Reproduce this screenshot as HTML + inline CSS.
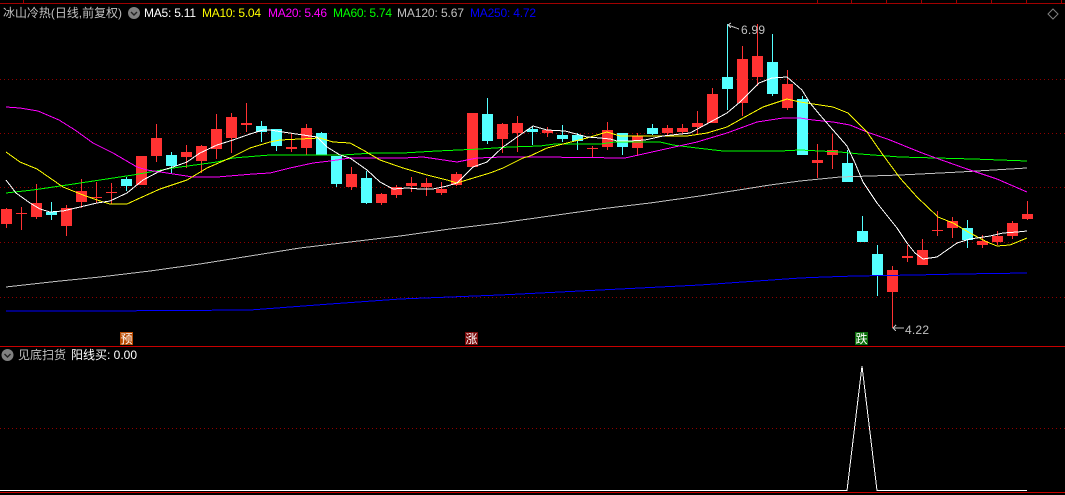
<!DOCTYPE html>
<html>
<head>
<meta charset="utf-8">
<title>冰山冷热</title>
<style>
html,body{margin:0;padding:0;background:#000;width:1065px;height:495px;overflow:hidden}
svg{display:block}
text{font-family:"Liberation Sans","WenQuanYi Zen Hei","Noto Sans CJK SC",sans-serif;font-size:12px}
</style>
</head>
<body>
<svg xmlns="http://www.w3.org/2000/svg" width="1065" height="495" viewBox="0 0 1065 495">
<rect width="1065" height="495" fill="#000"/>
<g shape-rendering="crispEdges">
<path d="M0 3.5H1065M23.5 0V3M817.5 0V3M851.5 0V3M886.5 0V3M921.5 0V3M956.5 0V3M991.5 0V3M1026.5 0V3M1061.5 0V3" stroke="#a00000" fill="none"/>
<path d="M0 79.5H1065M0 133.5H1065M0 187.5H1065M0 242.5H1065M0 297.5H1065M0 428.5H1065" stroke="#900000" stroke-dasharray="1 3" fill="none"/>
<path d="M0 346.5H1065M0 492.5H1065" stroke="#c80000" fill="none"/>

<path fill="none" stroke="#ff3232" d="M6.5 208V228M21.5 207V230M36.5 184V219M66.5 205V236M81.5 179V208M96.5 182V203M111.5 183V204M141.5 156V185M156.5 124V162M186.5 145V168M201.5 145V173M216.5 114V159M231.5 113V153M246.5 103V132M291.5 133V152M306.5 124V155M351.5 167V190M381.5 193V205M396.5 185V198M411.5 177V192M426.5 178V196M441.5 182V195M456.5 172V186M472.5 113V167M502.5 123V153M517.5 116V152M547.5 127V137M592.5 146V157M607.5 122V150M637.5 133V156M667.5 125V135M682.5 124V134M697.5 111V134M712.5 88V123M742.5 46V116M757.5 24V86M787.5 70V110M817.5 144V178M832.5 134V169M892.5 266V328M907.5 245V262M922.5 239V265M937.5 211V236M952.5 217V238M982.5 235V248M997.5 231V245M1012.5 221V239M1027.5 201V220"/>
<path fill="none" stroke="#54ffff" d="M51.5 202V220M126.5 177V191M171.5 152V174M261.5 121V142M276.5 129V151M321.5 132V155M336.5 156V187M366.5 171V204M487.5 98V144M532.5 126V145M562.5 125V142M577.5 133V150M622.5 133V155M652.5 124V135M727.5 24V110M772.5 34V96M802.5 96V155M847.5 150V182M862.5 216V242M877.5 245V296M967.5 220V248"/>
<path fill="#ff3232" d="M1 209h11v15h-11zM31 203h11v14h-11zM61 208h11v18h-11zM76 191h11v11h-11zM136 156h11v29h-11zM151 138h11v18h-11zM181 152h11v5h-11zM196 146h11v15h-11zM211 129h11v20h-11zM226 117h11v21h-11zM301 128h11v20h-11zM346 174h11v13h-11zM376 194h11v9h-11zM391 187h11v8h-11zM451 174h11v11h-11zM467 113h11v54h-11zM497 124h11v15h-11zM512 123h11v10h-11zM602 130h11v17h-11zM632 136h11v12h-11zM662 128h11v5h-11zM677 128h11v4h-11zM692 123h11v4h-11zM707 94h11v29h-11zM737 59h11v44h-11zM752 56h11v21h-11zM782 84h11v24h-11zM887 270h11v22h-11zM917 250h11v15h-11zM947 221h11v7h-11zM977 241h11v4h-11zM992 236h11v6h-11zM1007 223h11v13h-11zM1022 214h11v5h-11zM16 213h11v1h-11zM91 197h11v1h-11zM106 192h11v1h-11zM241 123h11v2h-11zM286 147h11v2h-11zM406 183h11v3h-11zM421 183h11v4h-11zM436 189h11v4h-11zM542 130h11v3h-11zM587 148h11v1h-11zM812 160h11v3h-11zM827 150h11v5h-11zM902 256h11v2h-11zM932 230h11v1h-11z"/>
<path fill="#54ffff" d="M46 212h11v3h-11zM121 179h11v7h-11zM166 155h11v11h-11zM256 126h11v6h-11zM271 129h11v17h-11zM316 133h11v22h-11zM331 156h11v28h-11zM361 178h11v25h-11zM482 114h11v27h-11zM527 129h11v3h-11zM557 135h11v4h-11zM572 135h11v6h-11zM617 133h11v14h-11zM647 128h11v6h-11zM722 77h11v12h-11zM767 62h11v32h-11zM797 99h11v56h-11zM842 163h11v19h-11zM857 231h11v11h-11zM872 254h11v22h-11zM962 228h11v12h-11z"/>

<g fill="none" stroke-width="1">
<polyline stroke="#c0c0c0" points="6,287 60,281 100,277 150,271 200,264 250,256 300,248 350,242 400,236 450,229 500,223 550,216 600,209 650,203 700,196 745,189 770,185 800,181 840,177 900,175 960,172 1027,168"/>
<polyline stroke="#0000ff" points="6,311 100,311 250,310 330,304 400,299 500,295 600,290 700,285 800,278 825,277 855,276 915,275 960,274 1027,273"/>
<polyline stroke="#00ff00" points="6,193 33,190 67,185 100,180 133,175 173,168 217,162 233,158 270,155 343,155 373,153 403,153 437,151 480,149 510,147 540,146 555,144 600,144 615,142 660,142 673,145 697,148 723,151 780,151 800,150 840,152 860,154 900,157 973,159 1027,161"/>
<polyline stroke="#ff00ff" points="6,107 20,108 38,111 59,120 75,130 93,143 113,153 137,167 147,170 167,173 193,177 217,177 253,174 270,173 290,168 313,163 330,161 350,158 403,158 423,157 437,159 457,162 477,158 503,157 540,157 625,158 643,154 670,148 697,142 727,133 757,122 783,118 800,118 813,120 833,122 850,125 867,132 890,140 917,151 933,157 967,169 997,179 1027,192"/>
<polyline stroke="#ffff00" points="6,152 20,162 37,169 50,178 63,187 83,195 100,201 110,204 127,204 140,198 160,189 187,180 207,168 230,158 250,148 270,142 280,140 300,139 320,138 333,142 350,143 363,150 380,160 403,168 427,175 447,180 457,183 470,179 490,173 503,168 523,158 530,156 547,148 567,143 587,138 607,132 620,136 643,136 687,136 707,133 727,127 743,118 763,107 787,99 800,102 820,105 833,107 848,113 867,132 883,155 900,178 917,197 938,217 953,223 970,233 987,242 997,246 1010,245 1027,238"/>
<polyline stroke="#ffffff" points="6,180 16,193 30,203 40,209 50,212 63,211 80,207 97,203 110,201 127,193 143,180 160,171 173,167 187,162 200,153 217,145 233,140 250,134 263,130 270,130 283,132 303,135 317,137 327,147 340,155 350,158 367,170 380,182 393,189 407,188 420,189 433,189 447,186 457,183 467,173 473,167 487,162 503,147 520,135 533,126 547,130 565,131 580,135 587,137 600,138 610,139 617,141 630,141 645,140 663,136 690,133 703,126 727,113 740,102 752,90 759,83 772,78 787,77 802,90 810,103 820,115 833,130 847,146 855,163 863,182 877,203 897,228 907,243 915,253 923,259 937,257 947,250 957,243 970,239 990,236 1003,233 1017,232 1027,231"/>
<polyline stroke="#ffffff" points="0,490.500 847,490.500 862,366 877,490.500 1027,490.500"/>
<polyline stroke="#c0c0c0" points="728,25 739,29"/>
<polyline stroke="#c0c0c0" points="731,23 728,25 731,28"/>
<polyline stroke="#c0c0c0" points="893,328 904,328"/>
<polyline stroke="#c0c0c0" points="896,325 893,328 896,331"/>
</g>
<rect x="120" y="332" width="13" height="13" fill="#b84a00"/>
<rect x="465" y="332" width="13" height="13" fill="#7a0a0a"/>
<rect x="855" y="332" width="13" height="13" fill="#0a6e0a"/>
</g>

<text x="3" y="17" fill="#c0c0c0" textLength="119" lengthAdjust="spacingAndGlyphs">冰山冷热(日线,前复权)</text>
<circle cx="134" cy="13" r="6" fill="#808080"/>
<path d="M131 12l3 3 3-3" fill="none" stroke="#222" stroke-width="1.4"/>
<text x="144" y="17" fill="#ffffff" textLength="52">MA5: 5.11</text>
<text x="202" y="17" fill="#ffff00" textLength="59">MA10: 5.04</text>
<text x="268" y="17" fill="#ff00ff" textLength="59">MA20: 5.46</text>
<text x="333" y="17" fill="#00ff00" textLength="59">MA60: 5.74</text>
<text x="397" y="17" fill="#c0c0c0" textLength="67">MA120: 5.67</text>
<text x="470" y="17" fill="#0000ff" textLength="66">MA250: 4.72</text>
<path d="M1053 9l5 5-5 5-5-5z" fill="none" stroke="#808080"/>

<text x="741" y="34" fill="#c0c0c0" textLength="24">6.99</text>
<text x="905" y="334" fill="#c0c0c0" textLength="24">4.22</text>

<text x="120.500" y="343" fill="#ffffff">预</text>
<text x="465.500" y="343" fill="#ffffff">涨</text>
<text x="855.500" y="343" fill="#ffffff">跌</text>

<circle cx="7.500" cy="355" r="6" fill="#808080"/>
<path d="M4.500 354l3 3 3-3" fill="none" stroke="#222" stroke-width="1.4"/>
<text x="18" y="359" fill="#c0c0c0" textLength="48" lengthAdjust="spacingAndGlyphs">见底扫货</text>
<text x="71" y="359" fill="#ffffff" textLength="66">阳线买: 0.00</text>
</svg>
</body>
</html>
